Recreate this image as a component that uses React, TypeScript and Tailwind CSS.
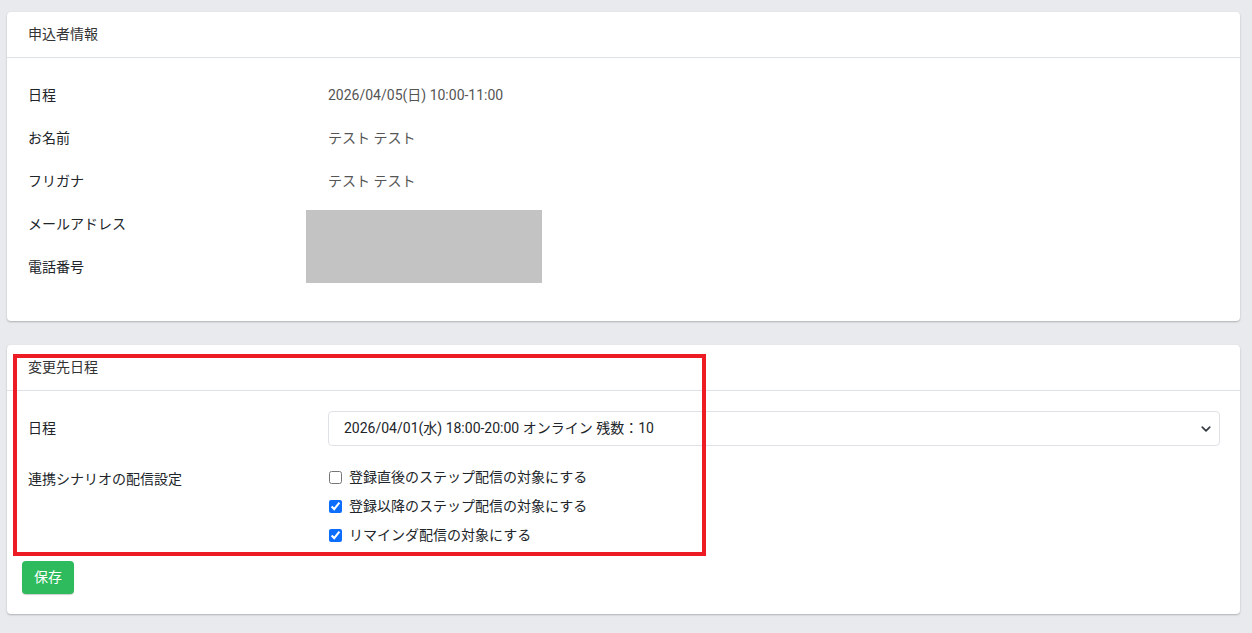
import { useState } from "react";

const FONT = {
  fontFamily: 'Roboto, "Noto Sans CJK JP", sans-serif',
};

const applicant = [
  { label: "日程", value: "2026/04/05(日) 10:00-11:00" },
  { label: "お名前", value: "テスト テスト" },
  { label: "フリガナ", value: "テスト テスト" },
  { label: "メールアドレス", value: "", masked: true },
  { label: "電話番号", value: "" },
];

const options = [
  { key: "immediate", label: "登録直後のステップ配信の対象にする", init: false },
  { key: "after", label: "登録以降のステップ配信の対象にする", init: true },
  { key: "remind", label: "リマインダ配信の対象にする", init: true },
];

export default function App() {
  const [checked, setChecked] = useState<Record<string, boolean>>(
    Object.fromEntries(options.map((o) => [o.key, o.init]))
  );

  return (
    <div
      className="min-h-[633px] bg-[#e9eaed] pt-3 pl-[7px] pr-3 pb-[19px] text-[14px] text-[#212529]"
      style={FONT}
    >
      {/* 申込者情報 */}
      <div className="bg-white rounded-[4px] shadow-[0_1px_2px_rgba(0,0,0,0.25)]">
        <div className="h-[46px] flex items-center px-[21px] border-b border-[#dee2e6] text-[#333]">
          申込者情報
        </div>
        <div className="pt-[16px] pb-[32px] px-[21px]">
          {applicant.map((row) => (
            <div key={row.label} className="flex items-center h-[43px]">
              <div className="w-[300px]">{row.label}</div>
              <div className="relative flex-1 text-[#555]">
                {row.value}
                {row.masked && (
                  <div className="absolute left-[-22px] top-[-15px] w-[236px] h-[73px] bg-[#c3c3c3]" />
                )}
              </div>
            </div>
          ))}
        </div>
      </div>

      {/* 変更先日程 */}
      <div className="relative mt-6 bg-white rounded-[4px] shadow-[0_1px_2px_rgba(0,0,0,0.25)]">
        <div className="h-[46px] flex items-center px-[21px] border-b border-[#dee2e6] text-[#333]">
          変更先日程
        </div>
        <div className="pt-[20px] pl-[21px] pr-[20px]">
          <div className="flex items-center">
            <div className="w-[300px]">日程</div>
            <div className="relative flex-1">
              <select className="w-full h-[35px] appearance-none rounded-[4px] border border-[#dee2e6] bg-white pl-[15px] pr-8 text-[14px] text-[#212529] outline-none">
                <option>2026/04/01(水) 18:00-20:00 オンライン 残数：10</option>
              </select>
              <svg
                viewBox="0 0 16 16"
                className="pointer-events-none absolute right-[6px] top-1/2 -translate-y-1/2 w-[16px] h-[12px]"
                fill="none"
                stroke="#343a40"
                strokeWidth="2.2"
                strokeLinecap="round"
                strokeLinejoin="round"
              >
                <path d="m3 5.5 5 5 5-5" />
              </svg>
            </div>
          </div>

          <div className="flex mt-[17px]">
            <div className="w-[300px] pt-[6px]">連携シナリオの配信設定</div>
            <div className="flex flex-col">
              {options.map((o) => (
                <label key={o.key} className="flex items-center h-[29px] gap-[7px] cursor-pointer">
                  <input
                    type="checkbox"
                    checked={checked[o.key]}
                    onChange={(e) => setChecked({ ...checked, [o.key]: e.target.checked })}
                    className="w-[13px] h-[13px] m-0 ml-px accent-[#0d6efd]"
                  />
                  <span>{o.label}</span>
                </label>
              ))}
            </div>
          </div>
        </div>
        <div className="px-[15px] pt-[11px] pb-[20px]">
          <button className="h-[33px] w-[52px] rounded-[4px] bg-[#2dbb5d] text-white text-[14px] shadow-[0_1px_1px_rgba(0,0,0,0.2)]">
            保存
          </button>
        </div>

        {/* annotation */}
        <div className="absolute left-[6px] top-[9px] w-[693px] h-[202px] border-4 border-[#ed1c24] pointer-events-none" />
      </div>
    </div>
  );
}
